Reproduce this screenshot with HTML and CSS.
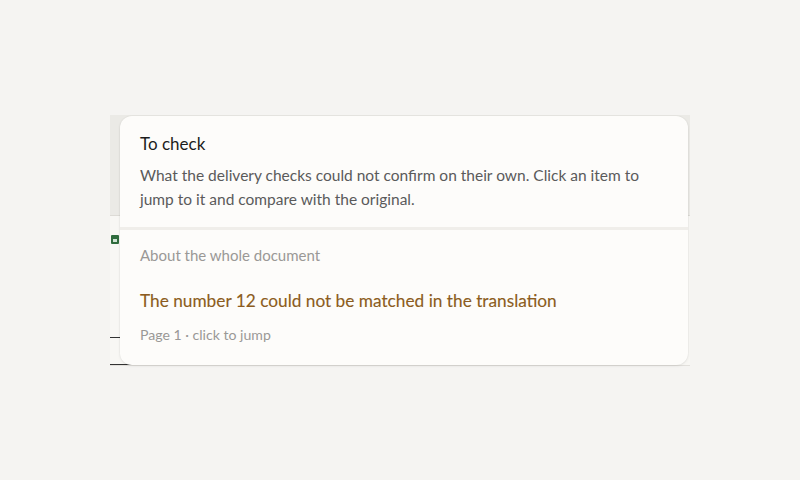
FILE: index.html
```html
<!DOCTYPE html>
<html lang="en">
<head>
<meta charset="utf-8">
<link rel="stylesheet" href="styles.css">
</head>
<body>
<div class="stage">
  <div class="doc">
    <div class="doc-head"></div>
    <div class="doc-mark"><span class="doc-mark-inner"></span></div>
    <div class="doc-rule doc-rule-a"></div>
    <div class="doc-rule doc-rule-b"></div>
  </div>
  <div class="popover">
    <div class="pop-head">
      <div class="pop-title">To check</div>
      <div class="pop-desc">What the delivery checks could not confirm on their own. Click an item to jump to it and compare with the original.</div>
    </div>
    <div class="pop-body">
      <div class="section-label">About the whole document</div>
      <div class="item">
        <div class="item-title">The number 12 could not be matched in the translation</div>
        <div class="item-meta">Page 1 · click to jump</div>
      </div>
    </div>
  </div>
</div>
</body>
</html>
```
FILE: styles.css
```css
html, body {
  margin: 0;
  height: 100%;
}
body {
  background: #f5f4f2;
  font-family: Lato, "Noto Sans", sans-serif;
  display: flex;
  align-items: center;
  justify-content: center;
}
.stage {
  position: relative;
  width: 580px;
  height: 251px;
}
.doc {
  position: absolute;
  inset: 0;
  background: #f8f7f4;
  border-bottom: 1px solid #e2e0dc;
}
.doc-head {
  height: 100px;
  background: #ebeae6;
  border-bottom: 1px solid #dddbd6;
}
.doc-mark {
  position: absolute;
  left: 1px;
  top: 120px;
  width: 8px;
  height: 9px;
  background: #2f6b3c;
  border-radius: 1px;
}
.doc-mark-inner {
  position: absolute;
  left: 2px;
  top: 4px;
  width: 4px;
  height: 3px;
  background: #cfe3d3;
}
.doc-rule {
  position: absolute;
  left: 0;
  height: 1px;
  background: #333;
}
.doc-rule-a { top: 222px; width: 10px; }
.doc-rule-b { top: 249px; width: 30px; }
.popover {
  position: absolute;
  left: 10px;
  top: 1px;
  right: 2px;
  bottom: 1px;
  background: #fdfcfa;
  border-radius: 12px;
  box-shadow: 0 1px 3px rgba(0, 0, 0, 0.08), 0 0 0 1px rgba(0, 0, 0, 0.02);
  overflow: hidden;
}
.pop-head {
  padding: 16px 20px 16px;
  border-bottom: 3px solid #f0eeea;
}
.pop-title {
  font-size: 17px;
  line-height: 24px;
  color: #1c1c1c;
}
.pop-desc {
  margin-top: 7px;
  font-size: 15.5px;
  line-height: 24px;
  color: #5a5a5a;
}
.pop-body {
  padding: 13px 20px 18px;
}
.section-label {
  font-size: 15px;
  line-height: 24px;
  color: #9a9896;
}
.item {
  margin-top: 22px;
}
.item-title {
  font-size: 17.25px;
  line-height: 24px;
  color: #8c5c20;
  -webkit-text-stroke: 0.12px currentColor;
}
.item-meta {
  margin-top: 10px;
  font-size: 14.1px;
  line-height: 24px;
  color: #9a9896;
}
```
